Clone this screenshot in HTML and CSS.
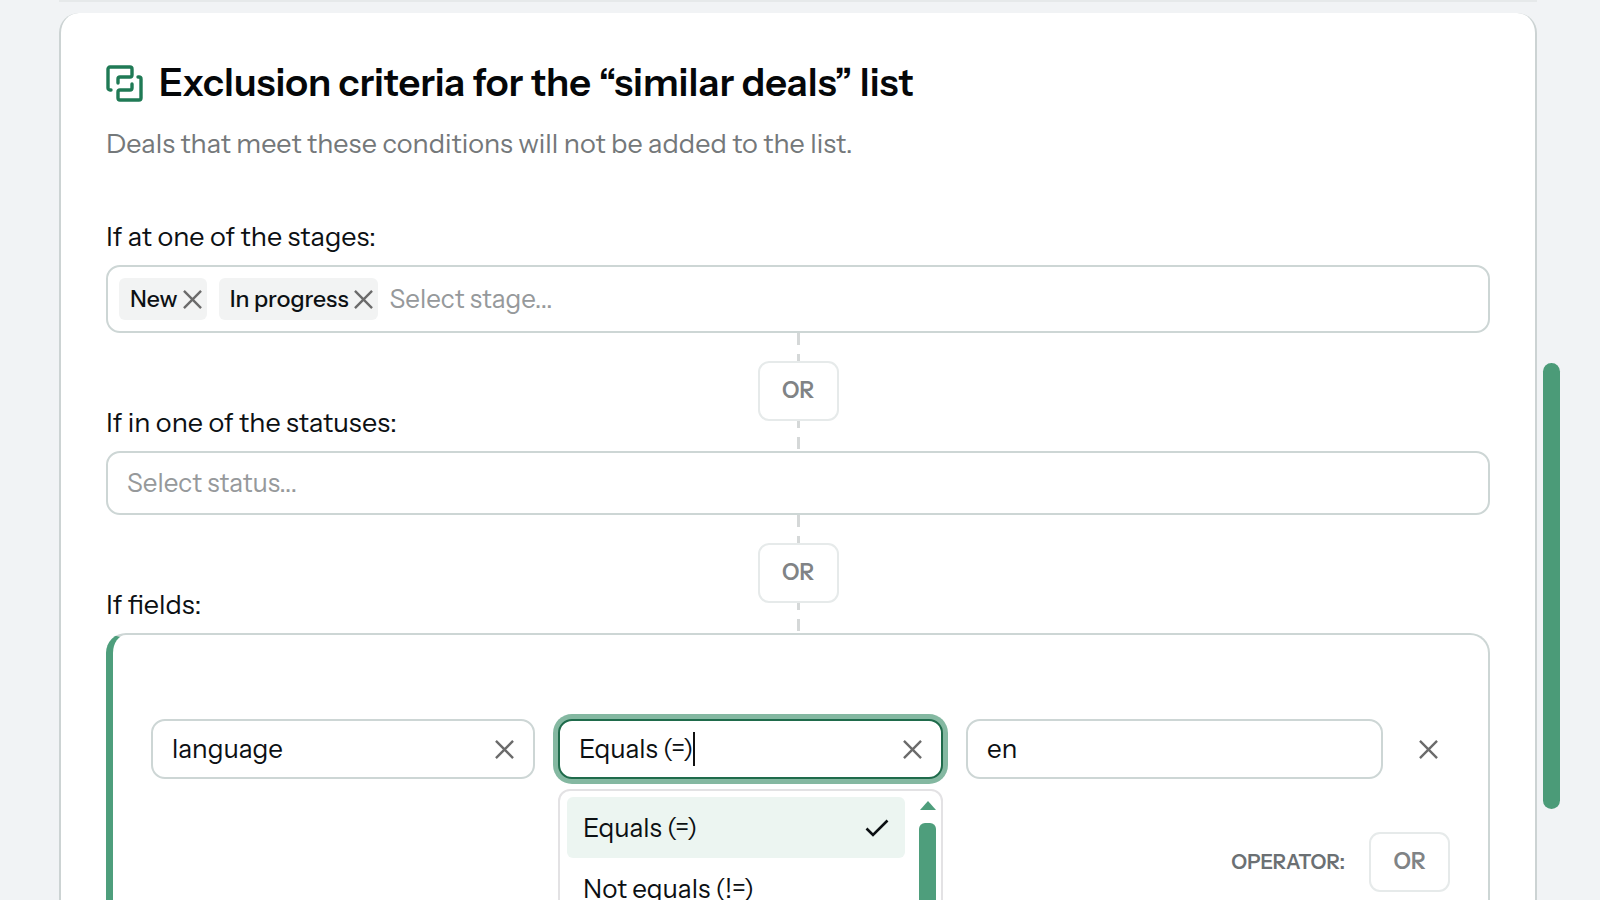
FILE: index.html
```html
<!DOCTYPE html>
<html lang="en">
<head>
<meta charset="utf-8">
<title>Exclusion criteria</title>
<link rel="stylesheet" href="styles.css">
</head>

<body>

<!-- shared icons -->
<svg class="sprite" aria-hidden="true">
  <symbol id="icon-x" viewBox="0 0 20 20">
    <path d="M1 1L19 19M19 1L1 19" fill="none" stroke="currentColor" stroke-width="2.5"/>
  </symbol>
  <symbol id="icon-check" viewBox="0 0 24 18">
    <path d="M1.5 9.5L8 16L22.5 1.5" fill="none" stroke="currentColor" stroke-width="2.6"/>
  </symbol>
</svg>

<div class="page">

  <!-- previous card, scrolled out -->
  <div class="card-above"></div>

  <main class="card">
    <h1 class="title">
      <svg class="title-icon" viewBox="0 0 37 37" fill="none" stroke="currentColor" stroke-width="3.4" stroke-linecap="round" stroke-linejoin="round" aria-hidden="true">
        <path d="M5 25H4a2 2 0 0 1-2-2V4a2 2 0 0 1 2-2h20a2 2 0 0 1 2 2v6a2 2 0 0 1-2 2h-10a2 2 0 0 0-2 2v4"/>
        <path d="M32 12H33a2 2 0 0 1 2 2v19a2 2 0 0 1-2 2H14a2 2 0 0 1-2-2v-6a2 2 0 0 1 2-2h10a2 2 0 0 0 2-2v-4"/>
      </svg>
      Exclusion criteria for the “similar deals” list
    </h1>
    <p class="subtitle">Deals that meet these conditions will not be added to the list.</p>

    <!-- STAGES -->
    <label class="label" for="stage">If at one of the stages:</label>
    <div class="field field-tags">
      <span class="tag">New <button class="clear" aria-label="Remove New"><svg class="x"><use href="#icon-x"/></svg></button></span>
      <span class="tag">In progress <button class="clear" aria-label="Remove In progress"><svg class="x"><use href="#icon-x"/></svg></button></span>
      <input class="input" id="stage" placeholder="Select stage...">
    </div>

    <!-- STATUSES -->
    <div class="joint">
      <label class="label" for="status">If in one of the statuses:</label>
      <div class="connector"><button class="or">OR</button></div>
    </div>
    <div class="field field-status">
      <input class="input" id="status" placeholder="Select status...">
    </div>

    <!-- FIELDS -->
    <div class="joint">
      <span class="label">If fields:</span>
      <div class="connector"><button class="or">OR</button></div>
    </div>
    <div class="group">
      <div class="rule">
        <div class="field">
          <input class="input" value="language" aria-label="Field">
          <button class="clear" aria-label="Clear field"><svg class="x"><use href="#icon-x"/></svg></button>
        </div>

        <div class="combo">
          <div class="field field-active">
            <input class="input input-fit" value="Equals (=)" aria-label="Condition">
            <span class="caret"></span>
            <button class="clear" aria-label="Clear condition"><svg class="x"><use href="#icon-x"/></svg></button>
          </div>
          <div class="menu">
            <ul class="options" role="listbox" aria-label="Condition">
              <li class="option selected" role="option" aria-selected="true">Equals (=) <svg class="check"><use href="#icon-check"/></svg></li>
              <li class="option" role="option">Not equals (!=)</li>
            </ul>
            <div class="menu-scroll">
              <span class="arrow-up"></span>
              <span class="menu-thumb"></span>
            </div>
          </div>
        </div>

        <div class="field">
          <input class="input" value="en" aria-label="Value">
        </div>

        <button class="clear remove" aria-label="Remove rule"><svg class="x"><use href="#icon-x"/></svg></button>
      </div>

      <div class="operator">
        <span>OPERATOR:</span>
        <button class="or">OR</button>
      </div>
    </div>
  </main>

  <div class="scrollbar"><span class="thumb"></span></div>
</div>

</body>
</html>
```

FILE: styles.css
```css
* {box-sizing:border-box;}

body {
  margin:0; height:100vh; overflow:hidden;
  background:#f1f3f5; color:#0c1013;
  font-family:"Instrument Sans", Inter, sans-serif; font-size:26px; line-height:34px;
}

button, input {font:inherit; color:inherit; border:0; background:none; padding:0; margin:0;}
button {cursor:pointer;}

.sprite {display:none;}

.page {
  display:grid; grid-template-columns:1fr 17px;
  grid-template-rows:2px 1fr; column-gap:6px; row-gap:11px;
  height:100vh; padding:0 40px 0 59px;
}

.card-above {background:#e6e9ea;}

.card {
  grid-column:1; padding:46px 45px 0;
  background:#fff; border:2px solid #ccd3d3; border-top:0; border-bottom:0;
  border-radius:20px 20px 0 0;
}

.title {
  display:flex; align-items:center; gap:16px;
  margin:0; font-size:38px; line-height:48px; font-weight:600; color:#050709;
}
.title-icon {width:37px; height:37px; color:#1f7a55;}

.subtitle {margin:20px 0 59px; font-size:27px; color:#74787a;}

.label {display:block; margin-bottom:11px; font-size:27px;}

.field {
  display:flex; align-items:center; min-width:0; height:60px;
  padding:0 19px; background:#fff;
  border:2px solid #cdd6d5; border-radius:14px;
}
.field-tags {height:68px; padding:0 11px; gap:12px;}
.field-status {height:64px;}

.input {flex:1; min-width:0; outline:0;}
.input::placeholder {color:#96999b; opacity:1;}
.input-fit {flex:none; field-sizing:content;}

.caret {width:2px; height:34px; background:#111;}

.tag {
  display:flex; align-items:center; gap:5px; height:42px;
  padding:0 5px 0 11px; background:#f2f3f3; border-radius:6px;
  font-size:23px; font-weight:500;
}

.clear {display:flex; margin-left:auto; color:#6b6b6b;}
.x {width:19px; height:19px;}

/* label on the left, dashed line with OR in the middle */
.joint {
  display:grid; grid-template-columns:1fr auto 1fr;
  align-items:end; height:118px;
}
.connector {
  display:flex; flex-direction:column; align-items:center; align-self:start;
}
.connector::before, .connector::after {
  content:""; width:3px; height:28px;
  background:repeating-linear-gradient(#d5d8d8 0 12px, transparent 12px 21px);
}
.connector::after {background:repeating-linear-gradient(to top, #d5d8d8 0 12px, transparent 12px 21px);}

.or {
  width:81px; height:60px; background:#fff;
  border:2px solid #e6eaea; border-radius:11px;
  font-size:22px; font-weight:600; color:#808385;
}

.group {
  height:400px; padding:84px 38px 0 38px;
  border:2px solid #cdd6d5; border-left:7px solid #4e9e7c;
  border-radius:20px;
}

.rule {
  display:grid; grid-template-columns:384fr 385fr 417fr 44px;
  column-gap:23px; align-items:center;
}
.remove {margin:0 auto;}

.combo {position:relative;}
.field-active {border-color:#1f6b4b; box-shadow:0 0 0 5px #84b8a1;}

.menu {
  position:absolute; top:70px; left:0; right:0;
  display:flex; justify-content:space-between; height:260px;
  padding:6px 5px 0 7px; background:#fff;
  border:2px solid #e3e2e4; border-radius:12px;
}
.options {flex:1; margin:0; padding:0; list-style:none;}
.option {
  display:flex; align-items:center; justify-content:space-between;
  height:61px; padding:0 16px; border-radius:6px;
}
.selected {background:#ecf5f1;}
.check {width:24px; height:18px;}

.menu-scroll {display:flex; flex-direction:column; align-items:center; gap:13px; margin-left:14px; padding-top:4px;}
.arrow-up {border:8px solid transparent; border-top:0; border-bottom:9px solid #4e9e7c;}
.menu-thumb {flex:1; width:17px; background:#4e9e7c; border-radius:6px 6px 0 0;}

.operator {
  display:flex; align-items:center; justify-content:flex-end; gap:24px;
  margin-top:53px; font-size:20px; font-weight:600; color:#6b7073;
}

.scrollbar {grid-column:2; padding-top:350px;}
.thumb {display:block; height:446px; background:#4b9b78; border-radius:9px;}
```
